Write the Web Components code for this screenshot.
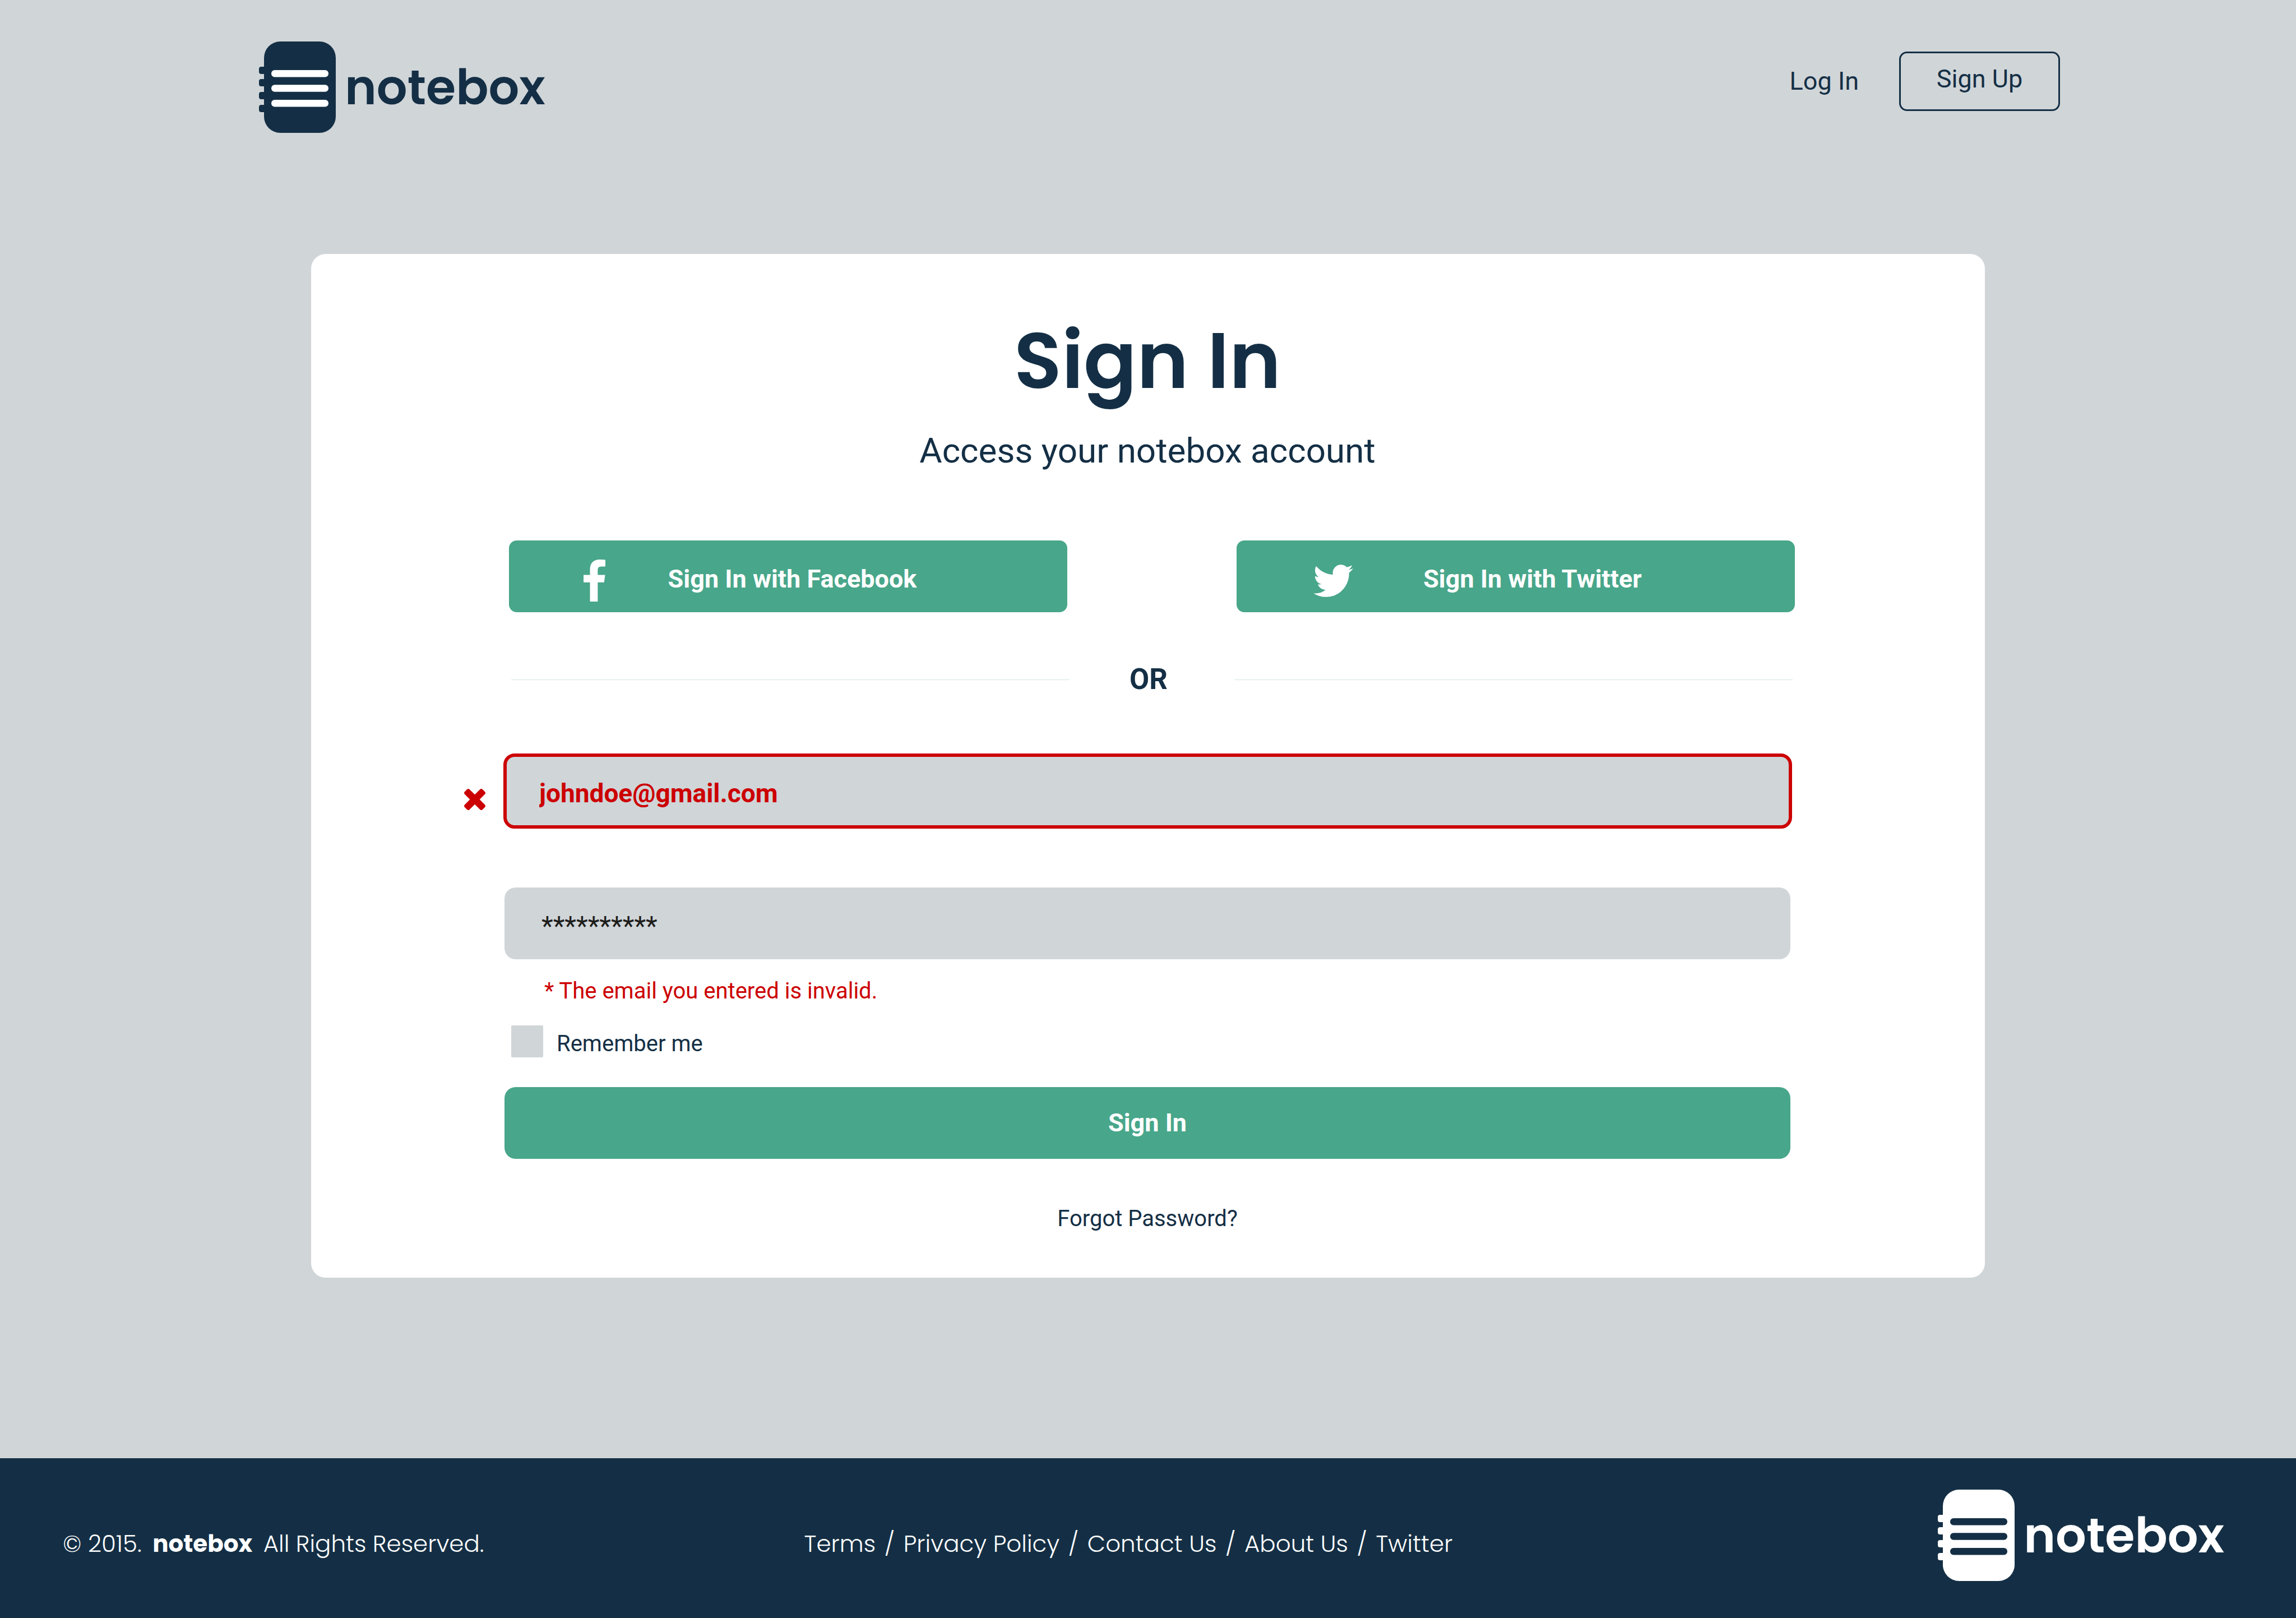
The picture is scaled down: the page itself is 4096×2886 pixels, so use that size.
<!DOCTYPE html>
<html lang="en">
<head>
<meta charset="utf-8">
<title>notebox – Sign In</title>
<style>
  :root {
    --navy: #142f45;
    --mist: #d0d5d8;
    --green: #48a68a;
    --red: #cc0000;
    --ink: #1d1d1b;
    --display: Poppins, Inter, sans-serif;
    --body: Roboto, "Noto Sans", sans-serif;
  }
  body {
    margin: 0;
    min-height: 100vh;
    display: flex;
    flex-direction: column;
    background: var(--mist);
    color: var(--navy);
    font-family: var(--body);
  }
  main { flex: 1; padding: 216px 0; }
</style>
</head>
<body>
<site-header></site-header>
<main>
  <sign-in-card>
    <span slot="title">Sign In</span>
    <span slot="subtitle">Access your notebox account</span>
  </sign-in-card>
</main>
<site-footer></site-footer>

<script>
  function define(name, html, setup) {
    const template = document.createElement('template');
    template.innerHTML = html;
    customElements.define(name, class extends HTMLElement {
      constructor() {
        super();
        this.attachShadow({ mode: 'open' }).append(template.content.cloneNode(true));
      }
      connectedCallback() {
        if (setup) setup(this, this.shadowRoot);
      }
    });
  }

  // Notebook mark with the wordmark beside it; --mark and --rule set its two colours.
  define('nb-logo', `
    <style>
      :host { display: block; }
      a {
        display: flex; align-items: center; gap: 16px;
        color: var(--mark, var(--navy)); text-decoration: none;
        font: 600 86px/120px var(--display);
      }
      svg { display: block; width: 137px; height: 163px; flex: none; }
      .mark { fill: currentColor; }
      .rule { fill: var(--rule, #fff); }
    </style>
    <a href="#">
      <svg viewBox="0 0 137 163" aria-hidden="true">
        <g class="mark">
          <rect x="9" width="128" height="163" rx="29"/>
          <rect y="45" width="20" height="13" rx="4"/>
          <rect y="67" width="20" height="13" rx="4"/>
          <rect y="90" width="20" height="13" rx="4"/>
          <rect y="113" width="20" height="13" rx="4"/>
        </g>
        <g class="rule">
          <rect x="22" y="51" width="102" height="12.4" rx="6"/>
          <rect x="22" y="77.3" width="102" height="12.4" rx="6"/>
          <rect x="22" y="104" width="102" height="12.4" rx="6"/>
        </g>
      </svg>
      <span>notebox</span>
    </a>`);

  define('site-header', `
    <style>
      :host { display: block; }
      header {
        display: flex; justify-content: space-between; align-items: flex-start;
        padding: 74px 421px 0 462px;
      }
      nav {
        display: flex; align-items: center; gap: 72px; padding-top: 18px;
        font-size: 45px; line-height: 56px;
      }
      a { color: inherit; text-decoration: none; }
      .outlined {
        display: flex; align-items: center; justify-content: center;
        box-sizing: border-box; width: 287px; height: 106px; padding-bottom: 9px;
        border: 3px solid; border-radius: 14px;
      }
    </style>
    <header>
      <nb-logo></nb-logo>
      <nav>
        <a href="#">Log In</a>
        <a class="outlined" href="#">Sign Up</a>
      </nav>
    </header>`);

  define('social-button', `
    <style>
      :host { display: block; }
      button {
        display: flex; align-items: center; justify-content: center;
        gap: var(--icon-gap, 112px);
        box-sizing: border-box; width: 100%; height: 128px; padding: 9px 136px 0 0;
        border: 0; border-radius: 14px;
        background: var(--green); color: #fff; cursor: pointer;
        font: 700 45px/56px var(--body);
      }
      ::slotted(svg) { display: block; margin-top: 6px; fill: currentColor; }
    </style>
    <button type="button"><slot name="icon"></slot><span><slot></slot></span></button>`);

  // Text box; the "invalid" attribute adds the red outline and the cross in the left margin.
  define('text-field', `
    <style>
      :host { display: block; }
      div { display: flex; }
      svg { display: none; width: 38px; height: 38px; fill: var(--red); }
      input {
        box-sizing: border-box; flex: 1; min-width: 0; height: 128px; margin: 0;
        padding: 8px 66px 0; border: 0; border-radius: 20px; outline: 0;
        background: var(--mist); color: var(--ink);
        font: 400 48px/60px var(--body);
      }
      :host([invalid]) div { align-items: flex-end; margin: 0 -3px 0 -72px; }
      :host([invalid]) svg { display: block; margin: 0 32px 33px 0; }
      :host([invalid]) input {
        height: 134px; padding: 8px 58px 0; border: 6px solid var(--red);
        color: var(--red); font-size: 46px; font-weight: 700;
      }
    </style>
    <div>
      <svg viewBox="302 366 1188 1188" aria-hidden="true"><path d="M1490 1322q0 40-28 68l-136 136q-28 28-68 28t-68-28l-294-294-294 294q-28 28-68 28t-68-28l-136-136q-28-28-28-68t28-68l294-294-294-294q-28-28-28-68t28-68l136-136q28-28 68-28t68 28l294 294 294-294q28-28 68-28t68 28l136 136q28 28 28 68t-28 68l-294 294 294 294q28 28 28 68z"/></svg>
      <input>
    </div>`,
    (host, root) => {
      const input = root.querySelector('input');
      input.type = host.getAttribute('type') || 'text';
      input.value = host.getAttribute('value') || '';
      input.setAttribute('aria-label', host.getAttribute('label') || '');
      if (host.hasAttribute('invalid')) input.setAttribute('aria-invalid', 'true');
    });

  define('sign-in-card', `
    <style>
      :host { display: block; }
      section {
        box-sizing: border-box; width: min(2986px, 94%); margin: 0 auto;
        padding: 110px 347px 81px 345px; border-radius: 26px; background: #fff;
      }
      h1 { margin: 0; text-align: center; font: 600 140px/160px var(--display); }
      .subtitle { margin: 41px 0 0; text-align: center; font-size: 62px; line-height: 80px; }
      .social {
        display: grid; grid-template-columns: 1fr 1fr; gap: 302px;
        margin: 120px -8px 0 8px;
      }
      .twitter { --icon-gap: 125px; }
      .divider {
        display: grid; grid-template-columns: 1fr 294px 1fr; align-items: center;
        margin: 90px -4px 0 12px;
      }
      .divider i { height: 1px; background: #d3e6df; }
      .divider span {
        padding-right: 12px; text-align: center;
        font-size: 51px; font-weight: 700; line-height: 60px;
      }
      .email { margin-top: 102px; }
      .password { margin-top: 105px; }
      .error { margin: 33px 0 0 71px; color: var(--red); font-size: 40px; line-height: 48px; }
      .remember { display: flex; align-items: flex-end; gap: 24px; margin: 37px 0 0 12px; }
      .remember input {
        appearance: none; width: 57px; height: 57px; margin: 0;
        border-radius: 2px; background: var(--mist);
      }
      .remember label { font-size: 40px; line-height: 48px; }
      .submit {
        display: block; width: 100%; height: 128px; margin: 53px 0 0; padding: 0;
        border: 0; border-radius: 20px; background: var(--green); color: #fff; cursor: pointer;
        font: 700 45px/56px var(--body);
      }
      .forgot { margin: 83px 0 0; text-align: center; font-size: 40px; line-height: 48px; }
      .forgot a { color: inherit; text-decoration: none; }
    </style>
    <section>
      <h1><slot name="title"></slot></h1>
      <p class="subtitle"><slot name="subtitle"></slot></p>
      <div class="social">
        <social-button>
          <svg slot="icon" width="39" height="75" viewBox="95 0 864 1664" aria-hidden="true"><path d="M959 12v264h-157q-86 0-116 36t-30 108v189h293l-39 296h-254v759h-306v-759h-255v-296h255v-218q0-186 104-288.500t277-102.500q147 0 228 12z"/></svg>
          Sign In with Facebook
        </social-button>
        <social-button class="twitter">
          <svg slot="icon" width="71" height="58" viewBox="108 256 1576 1280" aria-hidden="true"><path d="M1684 408q-67 98-162 167 1 14 1 42 0 130-38 259.500t-115.500 248.500-184.500 210.500-258 146-323 54.500q-271 0-496-145 35 4 78 4 225 0 401-138-105-2-188-64.500t-114-159.500q33 5 61 5 43 0 85-11-112-23-185.500-111.500t-73.500-205.500v-4q68 38 146 41-66-44-105-115t-39-154q0-88 44-163 121 149 294.500 238.500t371.500 99.500q-8-38-8-74 0-134 94.500-228.500t228.500-94.500q140 0 236 102 109-21 205-78-37 115-142 178 93-10 186-50z"/></svg>
          Sign In with Twitter
        </social-button>
      </div>
      <div class="divider"><i></i><span>OR</span><i></i></div>
      <form>
        <text-field class="email" label="Email" type="email" value="johndoe@gmail.com" invalid></text-field>
        <text-field class="password" label="Password" value="**********"></text-field>
        <p class="error" role="alert">* The email you entered is invalid.</p>
        <div class="remember">
          <input type="checkbox" id="remember">
          <label for="remember">Remember me</label>
        </div>
        <button class="submit" type="submit">Sign In</button>
      </form>
      <p class="forgot"><a href="#">Forgot Password?</a></p>
    </section>`);

  define('site-footer', `
    <style>
      :host { display: block; background: var(--navy); color: #fff; }
      footer {
        display: grid; grid-template-columns: 34.3% 1fr auto; align-items: start;
        padding: 56px 128px 66px 112px;
        font: 300 42px/60px var(--display);
      }
      p, nav { margin: 0; padding-top: 67px; white-space: nowrap; }
      b { margin: 0 8px; font-weight: 700; }
      i { margin: 0 4px; font-style: normal; }
      a { color: inherit; text-decoration: none; }
      nb-logo { --mark: #fff; --rule: var(--navy); }
    </style>
    <footer>
      <p>© 2015. <b>notebox</b> All Rights Reserved.</p>
      <nav>
        <a href="#">Terms</a> <i>/</i> <a href="#">Privacy Policy</a> <i>/</i> <a href="#">Contact Us</a> <i>/</i> <a href="#">About Us</a> <i>/</i> <a href="#">Twitter</a>
      </nav>
      <nb-logo></nb-logo>
    </footer>`);
</script>
</body>
</html>
